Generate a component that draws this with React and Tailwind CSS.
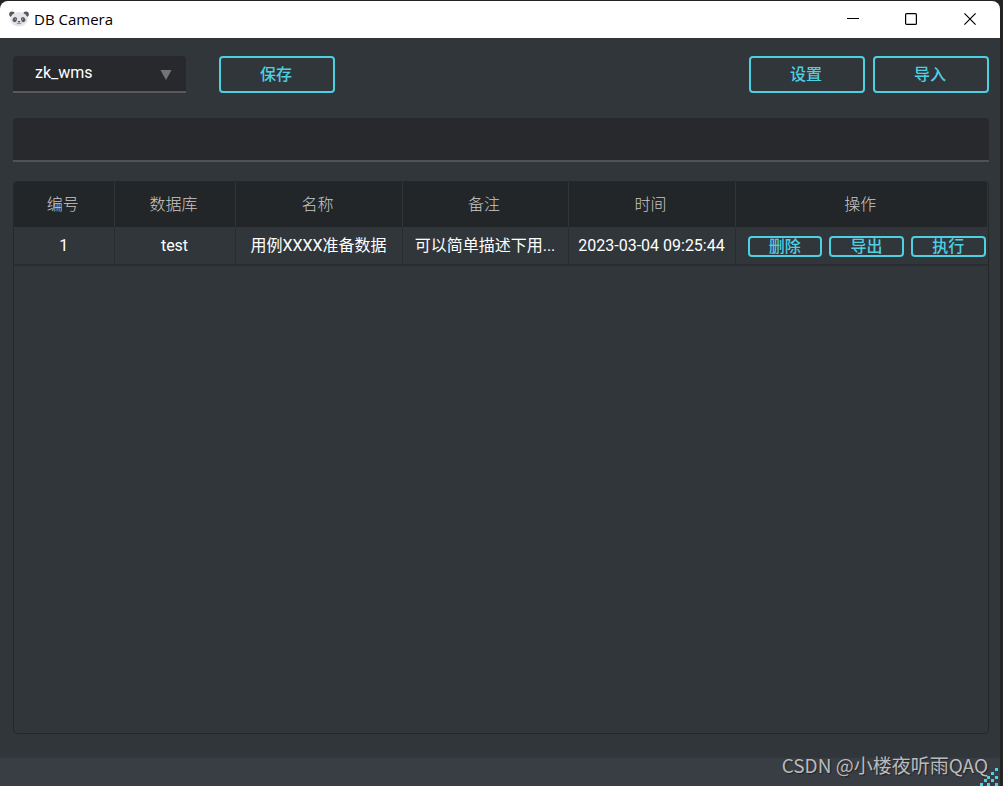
import React, { useState } from 'react';

const headers = ['编号', '数据库', '名称', '备注', '时间', '操作'];

const rows = [
  { id: 1, db: 'test', name: '用例XXXX准备数据', remark: '可以简单描述下用...', time: '2023-03-04 09:25:44' },
];

const gripDots = [
  [15, 0],
  [11, 4],
  [7, 8], [15, 8],
  [4, 11], [11, 11],
  [0, 15], [7, 15], [15, 15],
];

const PandaIcon = () => (
  <svg viewBox="0 0 20 16" className="h-4 w-5" aria-hidden="true">
    <circle cx="3" cy="3.2" r="2.8" fill="#55555f" />
    <circle cx="17" cy="3.2" r="2.8" fill="#55555f" />
    <ellipse cx="10" cy="8.3" rx="8.8" ry="7.3" fill="#e6e4e8" />
    <ellipse cx="5.8" cy="8.6" rx="2.1" ry="2.6" fill="#5a5963" transform="rotate(30 5.8 8.6)" />
    <ellipse cx="14.2" cy="8.6" rx="2.1" ry="2.6" fill="#5a5963" transform="rotate(-30 14.2 8.6)" />
    <circle cx="6.4" cy="8" r="0.5" fill="#e6e4e8" />
    <circle cx="13.6" cy="8" r="0.5" fill="#e6e4e8" />
    <ellipse cx="10" cy="10.8" rx="1.4" ry="0.8" fill="#45444d" />
    <path d="M7.6 12.2q1.2 1.2 2.4 0q1.2 1.2 2.4 0" fill="none" stroke="#77757f" strokeWidth="0.8" />
  </svg>
);

const TitleBar = () => (
  <header className="flex h-[37px] shrink-0 items-center justify-between rounded-t-lg bg-white pl-[9px] text-black">
    <div className="flex items-center gap-[5px] pb-0.5">
      <PandaIcon />
      <h1 className="font-['Open_Sans','Noto_Sans',sans-serif] text-[15px] leading-5">DB Camera</h1>
    </div>
    <div className="flex pb-px">
      <button type="button" aria-label="Minimize" className="flex h-8 w-[58px] items-center justify-center">
        <svg viewBox="0 0 12 12" className="h-3 w-3" shapeRendering="crispEdges">
          <path d="M0 5.5h12" stroke="#000" />
        </svg>
      </button>
      <button type="button" aria-label="Maximize" className="flex h-8 w-[58px] items-center justify-center">
        <svg viewBox="0 0 12 12" className="h-3 w-3">
          <rect x="0.6" y="0.6" width="10.8" height="10.8" rx="1" fill="none" stroke="#000" strokeWidth="1.2" />
        </svg>
      </button>
      <button type="button" aria-label="Close" className="flex h-8 w-[60px] items-center justify-center">
        <svg viewBox="0 0 12 12" className="h-3 w-3">
          <path d="M0.4 0.4l11.2 11.2M11.6 0.4L0.4 11.6" stroke="#000" strokeWidth="1.2" />
        </svg>
      </button>
    </div>
  </header>
);

const ToolButton = ({ children }) => (
  <button
    type="button"
    className="h-[37px] w-[116px] rounded border-2 border-[#4dd0e1] pr-0.5 text-base leading-5 font-medium text-[#4dd0e1] hover:bg-[#4dd0e1]/20"
  >
    {children}
  </button>
);

const RowButton = ({ children }) => (
  <button
    type="button"
    className="flex h-[21px] min-w-0 flex-1 items-center justify-center rounded border-2 border-[#4dd0e1] text-base leading-4 font-medium text-[#4dd0e1] hover:bg-[#4dd0e1]/20"
  >
    {children}
  </button>
);

const App = () => {
  const [database, setDatabase] = useState('zk_wms');
  const [sql, setSql] = useState('');

  return (
    <div className="min-h-screen bg-[#232323] pt-px pr-[3px] font-[Roboto,'Noto_Sans_CJK_SC',sans-serif]">
      <div className="flex min-h-[calc(100vh-1px)] flex-col rounded-t-lg bg-[#31363b]">
        <TitleBar />

        <main className="flex flex-1 flex-col pt-[18px] pr-[11px] pb-6 pl-[13px]">
          {/* Toolbar */}
          <div className="flex items-center">
            <div className="relative w-[173px]">
              <select
                aria-label="Database"
                value={database}
                onChange={(e) => setDatabase(e.target.value)}
                className="block h-[37px] w-full appearance-none rounded-t border-b-2 border-[#57595d] bg-[#27292d] pb-0.5 pl-[22px] text-base text-white outline-none"
              >
                <option value="zk_wms">zk_wms</option>
              </select>
              <svg viewBox="0 0 12 10" className="pointer-events-none absolute top-3.5 right-3.5 h-2.5 w-3" aria-hidden="true">
                <path d="M0.5 0h11L6 10z" fill="#757575" />
              </svg>
            </div>
            <div className="ml-[33px]">
              <ToolButton>保存</ToolButton>
            </div>
            <div className="ml-auto flex gap-2">
              <ToolButton>设置</ToolButton>
              <ToolButton>导入</ToolButton>
            </div>
          </div>

          <input
            type="text"
            aria-label="SQL"
            value={sql}
            onChange={(e) => setSql(e.target.value)}
            className="mt-[25px] h-11 w-full rounded-t border-b-2 border-[#505257] bg-[#27292d] px-4 text-base text-white outline-none"
          />

          {/* Case table */}
          <div className="mt-[19px] flex-1 overflow-hidden rounded border border-[#25282b]">
            <table className="w-full table-fixed border-collapse text-center text-base">
              <colgroup>
                <col className="w-[100px]" />
                <col className="w-[121px]" />
                <col className="w-[167px]" />
                <col className="w-[166px]" />
                <col className="w-[167px]" />
                <col />
              </colgroup>
              <thead>
                <tr className="h-[45px] bg-[#232629] text-[#c8c8c8]">
                  {headers.map((header) => (
                    <th key={header} className="border-r border-[#31363b] pr-0.5 font-light">
                      {header}
                    </th>
                  ))}
                </tr>
              </thead>
              <tbody>
                {rows.map((row) => (
                  <tr key={row.id} className="h-[38px] border-b-2 border-[#292d31] leading-5 whitespace-nowrap text-white">
                    <td className="border-r border-[#292d31]">{row.id}</td>
                    <td className="border-r border-[#292d31]">{row.db}</td>
                    <td className="border-r border-[#292d31]">{row.name}</td>
                    <td className="border-r border-[#292d31]">{row.remark}</td>
                    <td className="border-r border-[#292d31]">{row.time}</td>
                    <td className="pt-0.5 pr-0.5 pl-3">
                      <div className="flex gap-[7px]">
                        <RowButton>删除</RowButton>
                        <RowButton>导出</RowButton>
                        <RowButton>执行</RowButton>
                      </div>
                    </td>
                  </tr>
                ))}
              </tbody>
            </table>
          </div>
        </main>

        {/* Status bar */}
        <footer className="relative flex h-7 shrink-0 justify-end bg-[#393d44] pr-3">
          <span className="font-['Noto_Sans_CJK_SC',sans-serif] text-[19px] leading-3.5 whitespace-nowrap text-[#b9bbbd] [text-shadow:1px_1px_1px_#222]">
            CSDN @小楼夜听雨QAQ
          </span>
          <svg viewBox="0 0 18 18" className="absolute right-0.5 bottom-0 h-[18px] w-[18px]" shapeRendering="crispEdges" aria-hidden="true">
            {gripDots.map(([x, y]) => (
              <rect key={`${x}-${y}`} x={x} y={y} width="3" height="3" fill="#4dd0e1" />
            ))}
          </svg>
        </footer>
      </div>
    </div>
  );
};

export default App;
